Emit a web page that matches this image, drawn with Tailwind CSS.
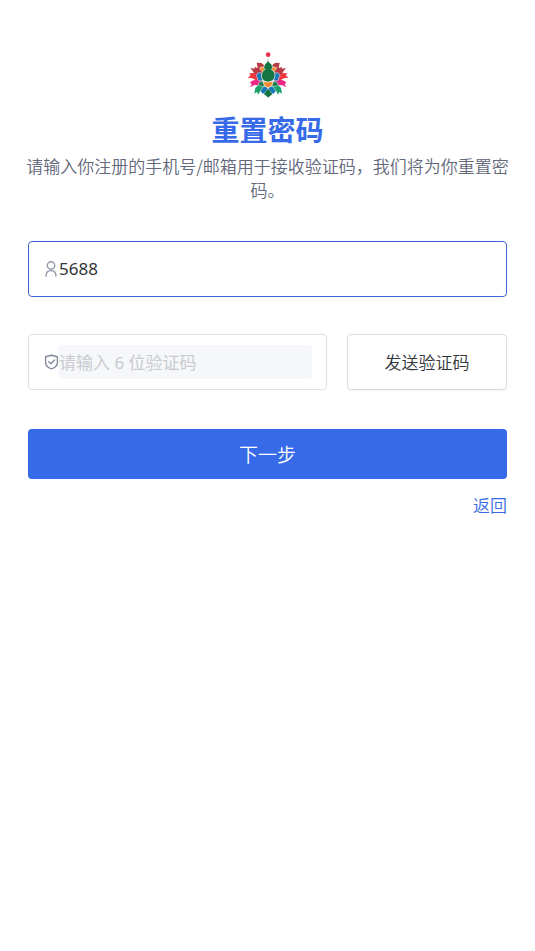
<!DOCTYPE html>
<html lang="zh-CN">
  <head>
    <meta charset="UTF-8" />
    <meta name="viewport" content="width=device-width, initial-scale=1.0" />
    <title>重置密码</title>
    <script src="https://cdn.jsdelivr.net/npm/@tailwindcss/browser@4"></script>
  </head>
  <body class="min-h-screen bg-white font-['Noto_Sans_CJK_SC',sans-serif] text-[17px] leading-6 font-[350] text-[#333639]">
    <main class="pt-13">
      <header class="flex flex-col items-center px-6 text-center">
        <svg class="h-[46px] w-10" viewBox="24 21 120 138" aria-hidden="true">
          <defs>
            <g id="petals">
              <path fill="#b73b45" d="M50 53 64 54 72 60 77 67 80 86 66 96 54 93 46 90 38 78 31 69 43 71 44 66 53 69Z" />
              <path fill="#ee3840" d="M66 103 48 106 37 100 23 98 31 92 28 85 42 84 54 89 64 93Z" />
              <path fill="#ec2786" d="M66 113 54 121 43 120 30 127 35 118 30 112 40 106 52 104 66 103Z" />
              <path fill="#1ba068" d="M80 119 72 136 60 139 55 149 51 141 43 146 46 129 55 120 67 113Z" />
              <g stroke="#fff" stroke-width="1.5">
                <path fill="#1676b8" d="M69 88Q56 77 50 89Q48 95 53 98Q50 110 68 107Z" />
                <path fill="#1676b8" d="M80 58 84 72 78 82 73 74ZM85 124 81 142 68 147 61 138 70 125Z" />
                <path fill="#f58a2d" d="M59 68Q70 61 77 72L75 82Q63 82 59 68Z" />
                <path fill="#16764a" d="M75 112Q63 105 55 115Q55 126 73 123Z" />
              </g>
            </g>
          </defs>
          <use href="#petals" />
          <use href="#petals" transform="matrix(-1 0 0 1 169 0)" />
          <path fill="#f58a2d" stroke="#fff" stroke-width="2" d="M69 111Q84 106 100 111Q96 126 84 128Q73 126 69 111Z" />
          <path fill="#157542" stroke="#fff" stroke-width="2" d="M84 40 87 51Q98 58 98 67Q98 70 94 73Q106 80 105 92Q103 110 84 111Q65 110 64 92Q64 80 75 73Q71 70 71 67Q72 58 81 51Z" />
          <path fill="#157542" stroke="#fff" stroke-width="1" d="M84.500 130 91 139 98 147 84.500 158 71 147 78 139Z" />
          <circle cx="84.500" cy="29" r="7" fill="#ec3048" />
        </svg>
        <h1 class="mt-[13px] text-[28px] leading-9 font-bold text-[#366ae8]">重置密码</h1>
        <p class="mt-[7px] text-[#63687a]">请输入你注册的手机号/邮箱用于接收验证码，我们将为你重置密码。</p>
      </header>

      <form class="mt-[39px] flex flex-col px-7">
        <label class="flex h-14 items-center rounded border border-[#3f66d6] px-4">
          <svg class="h-4 w-3.5 shrink-0" viewBox="0 0 14 16" fill="none" stroke="#9296a6" stroke-width="1.4" stroke-linecap="round" aria-hidden="true">
            <circle cx="6" cy="4.500" r="3.700" />
            <path d="M1 15C1 11.500 3 9.600 6 9.600S11 11.500 11 15" />
          </svg>
          <input class="w-full min-w-0 flex-1 font-['Noto_Sans','Noto_Sans_CJK_SC',sans-serif] font-normal outline-none" type="text" name="account" value="5688" aria-label="手机号/邮箱" />
        </label>

        <div class="mt-[37px] flex gap-5">
          <label class="flex h-14 min-w-0 flex-1 items-center rounded border border-[#dedfe2] pr-3.5 pl-4">
            <svg class="-ml-px h-4 w-[15px] shrink-0" viewBox="0 0 15 16" fill="none" stroke="#858b9d" stroke-width="1.4" stroke-linejoin="round" stroke-linecap="round" aria-hidden="true">
              <path d="M7.500 1.200 13.400 2.800V8.500C13.400 11.500 11 13.700 7.500 14.800C4 13.700 1.600 11.500 1.600 8.500V2.800Z" />
              <path d="M4.700 7.800 6.800 9.800 10.500 6" />
            </svg>
            <input class="h-[34px] w-full min-w-0 flex-1 rounded-xs bg-[#f5f7fa] font-['Noto_Sans','Noto_Sans_CJK_SC',sans-serif] font-normal outline-none placeholder:text-[#c9cbd0]" type="text" name="code" placeholder="请输入 6 位验证码" aria-label="验证码" />
          </label>
          <button type="button" class="h-14 w-40 rounded border border-[#dcdde4] shadow-xs">发送验证码</button>
        </div>

        <button type="submit" class="mt-[39px] h-[50px] rounded bg-[#366ae8] text-[19px] text-white">下一步</button>
        <a href="#" class="mt-3.5 self-end text-[#366ae8]">返回</a>
      </form>
    </main>
  </body>
</html>
